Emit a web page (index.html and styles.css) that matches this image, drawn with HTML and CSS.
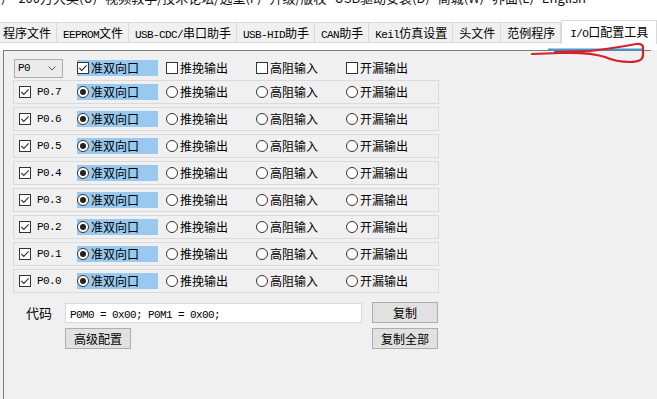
FILE: index.html
```html
<!DOCTYPE html>
<html lang="zh-CN">

<head>
  <meta charset="UTF-8">
  <meta name="viewport" content="width=device-width, initial-scale=1.0">
  <title>I/O口配置工具</title>
  <link rel="stylesheet" href="styles.css">
</head>

<body>
  <div class="top">
    <div class="menubar">
      <span class="mi first">)</span>
      <span class="mi">200万大奖(U)</span>
      <span class="mi">视频教学/技术论坛/选型(F)</span>
      <span class="mi">升级/版权</span>
      <span class="mi">USB驱动安装(D)</span>
      <span class="mi">商城(W)</span>
      <span class="mi">界面(L)</span>
      <span class="mi">English</span>
    </div>
    <div class="tabs">
      <div class="tab first">程序文件</div>
      <div class="tab"><span class="en">EEPROM</span>文件</div>
      <div class="tab"><span class="en">USB-CDC/</span>串口助手</div>
      <div class="tab"><span class="en">USB-HID</span>助手</div>
      <div class="tab"><span class="en">CAN</span>助手</div>
      <div class="tab"><span class="en">Keil</span>仿真设置</div>
      <div class="tab">头文件</div>
      <div class="tab">范例程序</div>
      <div class="tab active"><span class="en">I/O</span>口配置工具</div>
    </div>
  </div>

  <div class="panel">
    <div class="head">
      <div class="port">
        <div class="select">
          <span class="en">P0</span>
          <svg width="8" height="5" viewBox="0 0 8 5"><polyline points="0.5,0.5 4,4 7.5,0.5" fill="none" stroke="#555" stroke-width="1"/></svg>
        </div>
      </div>
      <div class="opts">
        <div class="opt hl"><span class="cb on"><svg viewBox="0 0 11 11"><path d="M1.5 5.5 L4.2 8.2 L9.5 2.5"/></svg></span>准双向口</div>
        <div class="opt"><span class="cb"></span>推挽输出</div>
        <div class="opt"><span class="cb"></span>高阻输入</div>
        <div class="opt"><span class="cb"></span>开漏输出</div>
      </div>
    </div>

    <div class="pin">
      <div class="port"><span class="cb on"><svg viewBox="0 0 11 11"><path d="M1.5 5.5 L4.2 8.2 L9.5 2.5"/></svg></span><span class="en">P0.7</span></div>
      <div class="opts">
        <div class="opt hl"><span class="rb on"></span>准双向口</div>
        <div class="opt"><span class="rb"></span>推挽输出</div>
        <div class="opt"><span class="rb"></span>高阻输入</div>
        <div class="opt"><span class="rb"></span>开漏输出</div>
      </div>
    </div>
    <div class="pin">
      <div class="port"><span class="cb on"><svg viewBox="0 0 11 11"><path d="M1.5 5.5 L4.2 8.2 L9.5 2.5"/></svg></span><span class="en">P0.6</span></div>
      <div class="opts">
        <div class="opt hl"><span class="rb on"></span>准双向口</div>
        <div class="opt"><span class="rb"></span>推挽输出</div>
        <div class="opt"><span class="rb"></span>高阻输入</div>
        <div class="opt"><span class="rb"></span>开漏输出</div>
      </div>
    </div>
    <div class="pin">
      <div class="port"><span class="cb on"><svg viewBox="0 0 11 11"><path d="M1.5 5.5 L4.2 8.2 L9.5 2.5"/></svg></span><span class="en">P0.5</span></div>
      <div class="opts">
        <div class="opt hl"><span class="rb on"></span>准双向口</div>
        <div class="opt"><span class="rb"></span>推挽输出</div>
        <div class="opt"><span class="rb"></span>高阻输入</div>
        <div class="opt"><span class="rb"></span>开漏输出</div>
      </div>
    </div>
    <div class="pin">
      <div class="port"><span class="cb on"><svg viewBox="0 0 11 11"><path d="M1.5 5.5 L4.2 8.2 L9.5 2.5"/></svg></span><span class="en">P0.4</span></div>
      <div class="opts">
        <div class="opt hl"><span class="rb on"></span>准双向口</div>
        <div class="opt"><span class="rb"></span>推挽输出</div>
        <div class="opt"><span class="rb"></span>高阻输入</div>
        <div class="opt"><span class="rb"></span>开漏输出</div>
      </div>
    </div>
    <div class="pin">
      <div class="port"><span class="cb on"><svg viewBox="0 0 11 11"><path d="M1.5 5.5 L4.2 8.2 L9.5 2.5"/></svg></span><span class="en">P0.3</span></div>
      <div class="opts">
        <div class="opt hl"><span class="rb on"></span>准双向口</div>
        <div class="opt"><span class="rb"></span>推挽输出</div>
        <div class="opt"><span class="rb"></span>高阻输入</div>
        <div class="opt"><span class="rb"></span>开漏输出</div>
      </div>
    </div>
    <div class="pin">
      <div class="port"><span class="cb on"><svg viewBox="0 0 11 11"><path d="M1.5 5.5 L4.2 8.2 L9.5 2.5"/></svg></span><span class="en">P0.2</span></div>
      <div class="opts">
        <div class="opt hl"><span class="rb on"></span>准双向口</div>
        <div class="opt"><span class="rb"></span>推挽输出</div>
        <div class="opt"><span class="rb"></span>高阻输入</div>
        <div class="opt"><span class="rb"></span>开漏输出</div>
      </div>
    </div>
    <div class="pin">
      <div class="port"><span class="cb on"><svg viewBox="0 0 11 11"><path d="M1.5 5.5 L4.2 8.2 L9.5 2.5"/></svg></span><span class="en">P0.1</span></div>
      <div class="opts">
        <div class="opt hl"><span class="rb on"></span>准双向口</div>
        <div class="opt"><span class="rb"></span>推挽输出</div>
        <div class="opt"><span class="rb"></span>高阻输入</div>
        <div class="opt"><span class="rb"></span>开漏输出</div>
      </div>
    </div>
    <div class="pin">
      <div class="port"><span class="cb on"><svg viewBox="0 0 11 11"><path d="M1.5 5.5 L4.2 8.2 L9.5 2.5"/></svg></span><span class="en">P0.0</span></div>
      <div class="opts">
        <div class="opt hl"><span class="rb on"></span>准双向口</div>
        <div class="opt"><span class="rb"></span>推挽输出</div>
        <div class="opt"><span class="rb"></span>高阻输入</div>
        <div class="opt"><span class="rb"></span>开漏输出</div>
      </div>
    </div>

    <div class="code">
      <span class="code-label">代码</span>
      <div class="code-box"><span class="en">P0M0 = 0x00; P0M1 = 0x00;</span></div>
      <button class="btn">复制</button>
      <span></span>
      <button class="btn">高级配置</button>
      <button class="btn">复制全部</button>
    </div>
  </div>

  <!-- 红笔标注 -->
  <svg class="mark" width="657" height="399" viewBox="0 0 657 399">
    <path d="M548 49.5 H643" stroke="#3d9bd6" stroke-width="2" fill="none" />
    <path d="M532 54 L560 53 Q590 52 605 57 Q616 62 630 62 Q643 62 643 55 L643 47 Q642 43 636 44 Q615 48 590 51 L555 52" stroke="#d5212b" stroke-width="2.2" fill="none" stroke-linecap="round" stroke-linejoin="round" />
  </svg>
</body>

</html>
```

FILE: styles.css
```css
body {
  margin: 0;
  background: #f0f0f0;
  font-family: "Noto Sans CJK SC", sans-serif;
  font-size: 12px;
  color: #000;
  width: 657px;
  height: 399px;
  overflow: hidden;
}

.en {
  font-family: "Liberation Mono", monospace;
  font-size: 11px;
  letter-spacing: -0.6px;
}

.top {
  background: #fff;
  height: 50px;
}

.menubar {
  display: flex;
  align-items: flex-end;
  height: 6px;
  overflow: hidden;
  font-size: 13px;
  color: #111;
  white-space: nowrap;
}

.mi {
  line-height: 16px;
  padding: 0 4px;
}

.mi.first {
  padding: 0 9px 0 1px;
}

.tabs {
  display: flex;
  align-items: flex-end;
  height: 24px;
  margin-top: 14px;
  white-space: nowrap;
}

.tab {
  height: 21px;
  line-height: 20px;
  box-sizing: border-box;
  margin-bottom: 1px;
  padding: 0 5px 0 6px;
  background: #f0f0f0;
  border: 1px solid #d9d9d9;
  border-left: none;
}

.tab.first {
  padding: 0 5px 0 3px;
}

.tab.active {
  height: 24px;
  line-height: 22px;
  margin-bottom: 0;
  padding: 0 8px;
  background: #fff;
  border: 1px solid #d9d9d9;
  border-bottom: none;
}

.panel {
  margin-left: 3px;
  width: 648px;
  height: 349px;
  box-sizing: border-box;
  border-top: 1px solid #7a7a7a;
  border-left: 1px solid #7a7a7a;
  padding: 7px 0 0 9px;
}

.head {
  display: flex;
  align-items: center;
  height: 20px;
  margin-bottom: 2px;
  padding-left: 1px;
}

.head .port {
  width: 63px;
}

.select {
  display: flex;
  align-items: center;
  justify-content: space-between;
  width: 49px;
  height: 19px;
  box-sizing: border-box;
  padding: 0 6px 0 3px;
  background: #ebebeb;
  border: 1px solid #adadad;
}

.pin {
  display: flex;
  align-items: center;
  width: 426px;
  height: 24px;
  box-sizing: border-box;
  margin-bottom: 3px;
  padding-left: 5px;
  border: 1px solid #dadada;
}

.pin .port {
  display: flex;
  align-items: center;
  gap: 4px;
  width: 58px;
}

.opts {
  display: flex;
  align-items: center;
}

.opt {
  display: flex;
  align-items: center;
  width: 90px;
  height: 16px;
  line-height: 16px;
  white-space: nowrap;
}

.opt.hl {
  width: 81px;
  margin-right: 8px;
  background: #99c9ef;
}

.cb {
  display: flex;
  align-items: center;
  justify-content: center;
  width: 12px;
  height: 12px;
  box-sizing: border-box;
  margin-right: 2px;
  background: #fff;
  border: 1px solid #333;
}

.cb svg {
  width: 10px;
  height: 10px;
}

.cb path {
  fill: none;
  stroke: #333;
  stroke-width: 1.2;
}

.rb {
  display: flex;
  align-items: center;
  justify-content: center;
  width: 12px;
  height: 12px;
  box-sizing: border-box;
  margin-right: 2px;
  background: #fff;
  border: 1px solid #333;
  border-radius: 50%;
}

.rb.on::after {
  content: "";
  width: 6px;
  height: 6px;
  border-radius: 50%;
  background: #222;
}

.code {
  display: grid;
  grid-template-columns: 52px 307px 66px;
  grid-template-rows: 21px 21px;
  row-gap: 5px;
  align-items: center;
  margin-top: 9px;
}

.code-label {
  justify-self: center;
  font-size: 13px;
}

.code-box {
  width: 297px;
  height: 20px;
  line-height: 18px;
  box-sizing: border-box;
  padding-left: 4px;
  background: #fff;
  border: 1px solid #d9d9d9;
}

.btn {
  width: 66px;
  height: 21px;
  padding: 0;
  font-family: "Noto Sans CJK SC", sans-serif;
  font-size: 12px;
  color: #000;
  background: #e1e1e1;
  border: 1px solid #adadad;
}

.mark {
  position: absolute;
  top: 0;
  left: 0;
  pointer-events: none;
}
```
